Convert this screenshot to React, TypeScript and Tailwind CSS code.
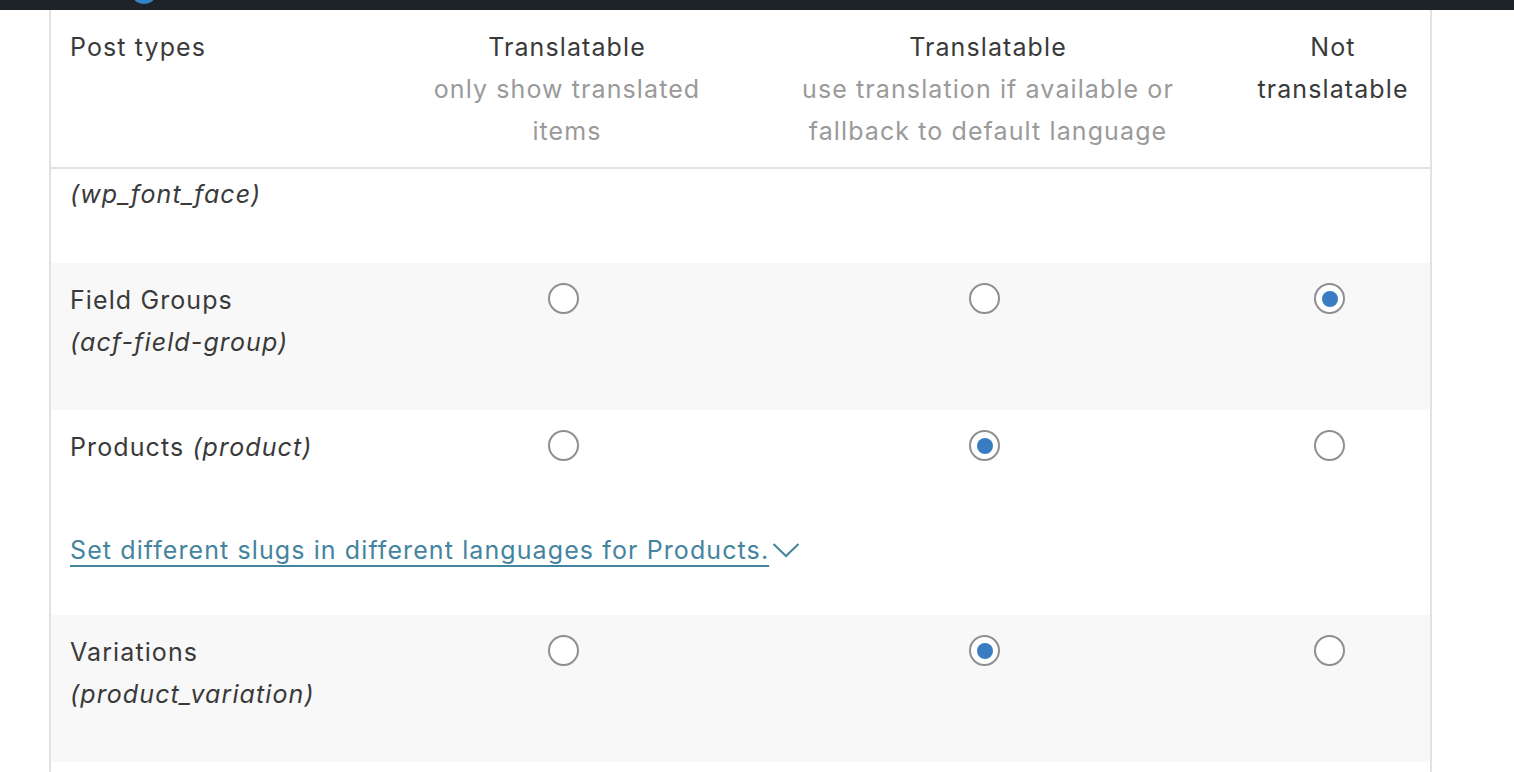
import React from "react";

type Choice = 0 | 1 | 2 | null;

function Radio({ checked }: { checked?: boolean }) {
  return (
    <span className="mr-[7px] flex h-[31px] w-[31px] items-center justify-center rounded-full border-2 border-[#8c8f94] bg-white">
      {checked && <span className="h-[16px] w-[16px] rounded-full bg-[#3a7cc2]" />}
    </span>
  );
}

function Cell({ checked }: { checked?: boolean }) {
  return (
    <div className="flex justify-center pt-[4px]">
      <Radio checked={checked} />
    </div>
  );
}

function Radios({ value }: { value: Choice }) {
  return (
    <>
      <Cell checked={value === 0} />
      <Cell checked={value === 1} />
      <Cell checked={value === 2} />
    </>
  );
}

const cols = "grid grid-cols-[343px_346px_496px_194px]";

export default function App() {
  return (
    <div
      className="min-h-screen bg-white text-[25px] leading-[42px] tracking-[1.1px] text-[#3a3a3a]"
      style={{ fontFamily: "Inter, 'Noto Sans', sans-serif" }}
    >
      <div className="relative h-[10px] overflow-hidden bg-[#1d2327]">
        <span className="absolute left-[131px] top-[-22px] h-[26px] w-[26px] rounded-full bg-[#3582c4]" />
      </div>

      <div className="ml-[49px] w-[1383px] border-x-2 border-[#e2e2e2] bg-white">
        {/* header */}
        <div className={`${cols} border-b-2 border-[#e2e2e2] pb-[15px] pt-[16px]`}>
          <div className="pl-[19px]">Post types</div>
          <div className="text-center">
            Translatable
            <div className="text-[#9a9a9a]">
              only show translated
              <br />
              items
            </div>
          </div>
          <div className="text-center">
            Translatable
            <div className="text-[#9a9a9a]">
              use translation if available or
              <br />
              fallback to default language
            </div>
          </div>
          <div className="text-center">
            Not
            <br />
            translatable
          </div>
        </div>

        {/* partly scrolled row */}
        <div className={`${cols} h-[94px] pt-[4px]`}>
          <div className="pl-[19px] italic">(wp_font_face)</div>
        </div>

        <div className={`${cols} h-[147px] bg-[#f8f8f8] pt-[16px]`}>
          <div className="pl-[19px]">
            Field Groups
            <div className="italic">(acf-field-group)</div>
          </div>
          <Radios value={2} />
        </div>

        <div className="h-[205px] pt-[16px]">
          <div className={cols}>
            <div className="pl-[19px]">
              Products <span className="italic">(product)</span>
            </div>
            <Radios value={1} />
          </div>
          <div className="mt-[61px] flex items-center pl-[19px]">
            <a href="#" className="text-[#44849e] underline decoration-[2px] underline-offset-[6px]">
              Set different slugs in different languages for Products.
            </a>
            <svg width="28" height="16" viewBox="0 0 28 16" className="ml-[3px]" fill="none">
              <path d="M1.5 2 L14 14 L26.5 2" stroke="#44849e" strokeWidth="2" />
            </svg>
          </div>
        </div>

        <div className={`${cols} h-[147px] bg-[#f8f8f8] pt-[16px]`}>
          <div className="pl-[19px]">
            Variations
            <div className="italic">(product_variation)</div>
          </div>
          <Radios value={1} />
        </div>

        <div className="h-[20px]" />
      </div>
    </div>
  );
}
